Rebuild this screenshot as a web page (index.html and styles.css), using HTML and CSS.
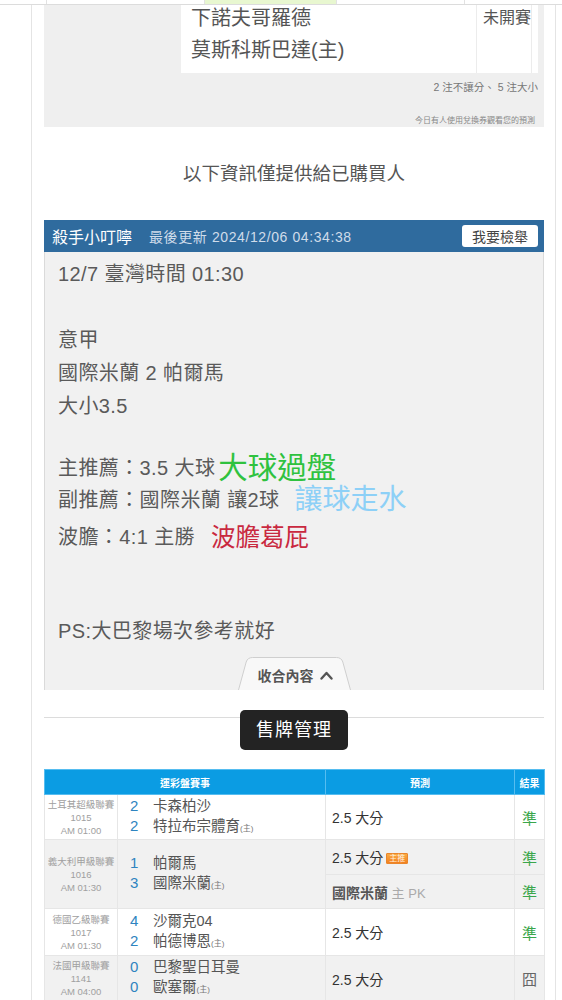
FILE: index.html
```html
<!DOCTYPE html>
<html lang="zh-Hant">
<head>
<meta charset="utf-8">
<title>預測</title>
<link rel="stylesheet" href="styles.css">
</head>
<body>
<div class="strip">
  <div class="sc s1"></div><div class="sc s2"></div><div class="sc s3"></div><div class="sc s4"></div><div class="sc s5"></div>
</div>
<div class="page">
  <div class="prev">
    <div class="prev-table">
      <div class="pt-teams"><div>下諾夫哥羅德</div><div>莫斯科斯巴達(主)</div></div>
      <div class="pt-status">未開賽</div>
      <div class="pt-end"></div>
    </div>
    <div class="prev-count">2 注不讓分、 5 注大小</div>
    <div class="prev-note">今日有人使用兌換券觀看您的預測</div>
  </div>

  <div class="notice">以下資訊僅提供給已購買人</div>

  <div class="post">
    <div class="post-head">
      <span class="author">殺手小叮嚀</span>
      <span class="updated">最後更新 2024/12/06 04:34:38</span>
      <button class="report">我要檢舉</button>
    </div>
    <div class="post-body">
      <div class="l">12/7 臺灣時間 01:30</div>
      <div class="l"></div>
      <div class="l">意甲</div>
      <div class="l">國際米蘭 2 帕爾馬</div>
      <div class="l">大小3.5</div>
      <div class="l gap1"></div>
      <div class="l pick">主推薦：3.5 大球<span class="big green">大球過盤</span></div>
      <div class="l pick">副推薦：國際米蘭 讓2球 <span class="big blue">讓球走水</span></div>
      <div class="l pick3">波膽：4:1 主勝 <span class="mid red">波膽葛屁</span></div>
      <div class="gap2"></div>
      <div class="l">PS:大巴黎場次參考就好</div>
      <div class="tab-row">
        <div class="tab">
          <svg class="tab-bg" width="113" height="33" viewBox="0 0 113 33"><path d="M0.5 33 L8.2 5 Q9.6 0.5 14.5 0.5 L98.5 0.5 Q103.4 0.5 104.8 5 L112.5 33" fill="#f8f8f8" stroke="#cfcfcf" stroke-width="1"/></svg>
          <span class="tab-text">收合內容</span>
          <svg class="chev" width="13" height="9" viewBox="0 0 13 9"><path d="M1.5 7.5 L6.5 2 L11.5 7.5" fill="none" stroke="#555" stroke-width="2.4" stroke-linecap="round" stroke-linejoin="round"/></svg>
        </div>
      </div>
    </div>
  </div>

  <div class="divider"></div>
  <div class="sell-row"><span class="sell">售牌管理</span></div>

  <table class="record">
    <colgroup><col class="c1"><col class="c2"><col class="c3"><col class="c4"></colgroup>
    <thead>
      <tr><th colspan="2">運彩盤賽事</th><th>預測</th><th>結果</th></tr>
    </thead>
    <tbody>
      <tr class="r1 white">
        <td class="lg">土耳其超級聯賽<br>1015<br>AM 01:00</td>
        <td class="mt"><div class="tm"><span class="sc2">2</span>卡森柏沙</div><div class="tm"><span class="sc2">2</span>特拉布宗體育<small>(主)</small></div></td>
        <td class="pd">2.5 大分</td>
        <td class="rs ok">準</td>
      </tr>
      <tr class="r2a grey">
        <td class="lg" rowspan="2">義大利甲級聯賽<br>1016<br>AM 01:30</td>
        <td class="mt" rowspan="2"><div class="tm"><span class="sc2">1</span>帕爾馬</div><div class="tm"><span class="sc2">3</span>國際米蘭<small>(主)</small></div></td>
        <td class="pd">2.5 大分<span class="badge">主推</span></td>
        <td class="rs ok">準</td>
      </tr>
      <tr class="r2b grey">
        <td class="pd"><span class="team-pick">國際米蘭</span><span class="pk"> 主 PK</span></td>
        <td class="rs ok">準</td>
      </tr>
      <tr class="r3 white">
        <td class="lg">德國乙級聯賽<br>1017<br>AM 01:30</td>
        <td class="mt"><div class="tm"><span class="sc2">4</span>沙爾克04</div><div class="tm"><span class="sc2">2</span>帕德博恩<small>(主)</small></div></td>
        <td class="pd">2.5 大分</td>
        <td class="rs ok">準</td>
      </tr>
      <tr class="r4 grey">
        <td class="lg">法國甲級聯賽<br>1141<br>AM 04:00</td>
        <td class="mt"><div class="tm"><span class="sc2">0</span>巴黎聖日耳曼</div><div class="tm"><span class="sc2">0</span>歐塞爾<small>(主)</small></div></td>
        <td class="pd">2.5 大分</td>
        <td class="rs bad">囧</td>
      </tr>
    </tbody>
  </table>
</div>
</body>
</html>
```

FILE: styles.css
```css
* { box-sizing: border-box; }
html, body { margin: 0; padding: 0; background: #fff; }
body {
  font-family: "Liberation Sans", "Noto Sans CJK TC", sans-serif;
  color: #555;
}

/* sticky top strip (remains of the header above) */
.strip {
  position: fixed;
  top: 0; left: 0; right: 0;
  height: 5px;
  display: flex;
  border-bottom: 1px solid #dcdcdc;
  background: #fff;
  z-index: 5;
}
.sc { height: 4px; border-right: 1px solid #e2e2e2; }
.s1 { width: 47px; }
.s2 { width: 158px; }
.s3 { width: 132px; background: #e8f7d0; }
.s4 { width: 128px; }
.s5 { flex: 1; border-right: 0; }

.page {
  margin-left: 31px;
  width: 525px;
  padding: 0 11px 0 12px;
  border-left: 1px solid #e4e4e4;
  border-right: 1px solid #e4e4e4;
  min-height: 1000px;
}

/* previous card */
.prev {
  background: #efefef;
  height: 127px;
  padding-top: 2px;
}
.prev-table {
  margin: 0 6px 0 137px;
  background: #fff;
  display: flex;
  height: 71px;
}
.pt-teams {
  width: 296px;
  padding-left: 10px;
  font-size: 20px;
  line-height: 32px;
  color: #555;
  border-right: 1px solid #ececec;
}
.pt-status {
  flex: 1;
  font-size: 16px;
  line-height: 32px;
  padding-left: 6px;
  color: #555;
  white-space: nowrap;
  border-right: 1px solid #ececec;
}
.pt-end { width: 6px; }
.prev-count {
  margin-top: 7px;
  text-align: right;
  font-size: 10.5px;
  line-height: 14px;
  padding-right: 6px;
  color: #777;
}
.prev-note {
  margin-top: 21px;
  text-align: right;
  font-size: 8px;
  line-height: 12px;
  padding-right: 9px;
  color: #888;
}

.notice {
  margin: 35px 0 34px;
  text-align: center;
  font-size: 18.5px;
  line-height: 24px;
  color: #555;
}

/* post */
.post-head {
  height: 32px;
  background: #2f6b9e;
  display: flex;
  align-items: center;
  padding: 0 6px 0 8px;
}
.author { font-size: 16px; color: #fff; }
.updated { margin-left: 17px; font-size: 14px; letter-spacing: 0.6px; color: #cfdcea; }
.report {
  margin-left: auto;
  width: 76px;
  height: 22px;
  border: 0;
  border-radius: 3px;
  background: #fff;
  color: #444;
  font-family: inherit;
  font-size: 14px;
  padding: 0;
}
.post-body {
  background: #f1f1f1;
  border-left: 1px solid #dadada;
  border-right: 1px solid #dadada;
  padding: 6px 0 0 13px;
  height: 438px;
  font-size: 20px;
  letter-spacing: 0.4px;
  color: #5a5a5a;
}
.l { height: 33px; line-height: 33px; white-space: nowrap; }
.gap1 { height: 29px; }
.pick { height: 32px; line-height: 32px; display: flex; align-items: center; }
.pick3 { height: 42px; display: flex; align-items: center; white-space: nowrap; }
.gap2 { height: 57px; }
.big { font-size: 28px; line-height: 32px; letter-spacing: 0; }
.mid { font-size: 24.5px; margin-left: 16px; letter-spacing: 0; }
.green { color: #2fc23f; margin-left: 3px; font-size: 29.5px; }
.blue { color: #8dd0f7; margin-left: 15px; }
.red { color: #c9293f; }

.tab-row {
  margin-top: 9px;
  display: flex;
  justify-content: center;
  margin-left: -13px;
}
.tab {
  position: relative;
  width: 113px;
  height: 33px;
  display: flex;
  justify-content: center;
  align-items: center;
  gap: 6px;
  padding-top: 3px;
  padding-left: 2px;
  letter-spacing: 0;
}
.tab-bg { position: absolute; left: 0; top: 0; }
.tab-text { position: relative; font-size: 14px; font-weight: bold; color: #555; }
.chev { position: relative; }

.divider {
  margin-top: 27px;
  border-top: 1px solid #dcdcdc;
}
.sell-row {
  margin-top: -8px;
  display: flex;
  justify-content: center;
}
.sell {
  width: 108px;
  height: 40px;
  background: #232323;
  color: #fff;
  border-radius: 5px;
  font-size: 18px;
  line-height: 40px;
  text-align: center;
  letter-spacing: 1px;
}

/* record table */
.record {
  margin-top: 19px;
  width: 500px;
  border-collapse: collapse;
  table-layout: fixed;
}
.c1 { width: 73px; }
.c2 { width: 208px; }
.c3 { width: 189px; }
.c4 { width: 30px; }
.record th {
  height: 25px;
  background: #0b9ce3;
  color: #fff;
  font-size: 10px;
  font-weight: bold;
  border: 1px solid #56bdf0;
  padding: 0;
}
.record td {
  border: 1px solid #e6e6e6;
  padding: 0;
  vertical-align: middle;
}
.white td { background: #fff; }
.grey td { background: #f1f1f1; }
.r1 td { height: 45px; }
.r2a td { height: 35px; }
.r2b td { height: 34px; }
.r3 td { height: 47px; }
.r4 td { height: 46px; }
.lg {
  text-align: center;
  font-size: 9.5px;
  line-height: 13px;
  color: #a0a0a0;
}
.mt { padding-left: 12px !important; }
.tm {
  display: flex;
  align-items: baseline;
  font-size: 14.5px;
  line-height: 20px;
  color: #555;
}
.sc2 { width: 23px; color: #2e84c0; font-size: 15px; }
.tm small { font-size: 8px; color: #777; }
.pd {
  padding-left: 6px !important;
  font-size: 14px;
  color: #333;
  white-space: nowrap;
}
.badge {
  display: inline-block;
  vertical-align: 2px;
  margin-left: 3px;
  height: 11px;
  padding: 0 2px;
  font-size: 8px;
  line-height: 10px;
  color: #fff3e0;
  background: linear-gradient(#f9ab45, #f2801f);
  border: 1px solid #e9862c;
  border-radius: 1px;
}
.team-pick { color: #555; font-weight: bold; }
.pk { color: #aaa; font-size: 13px; }
.rs { text-align: center; font-size: 15px; }
.ok { color: #3aa64a; }
.bad { color: #666; }
```
